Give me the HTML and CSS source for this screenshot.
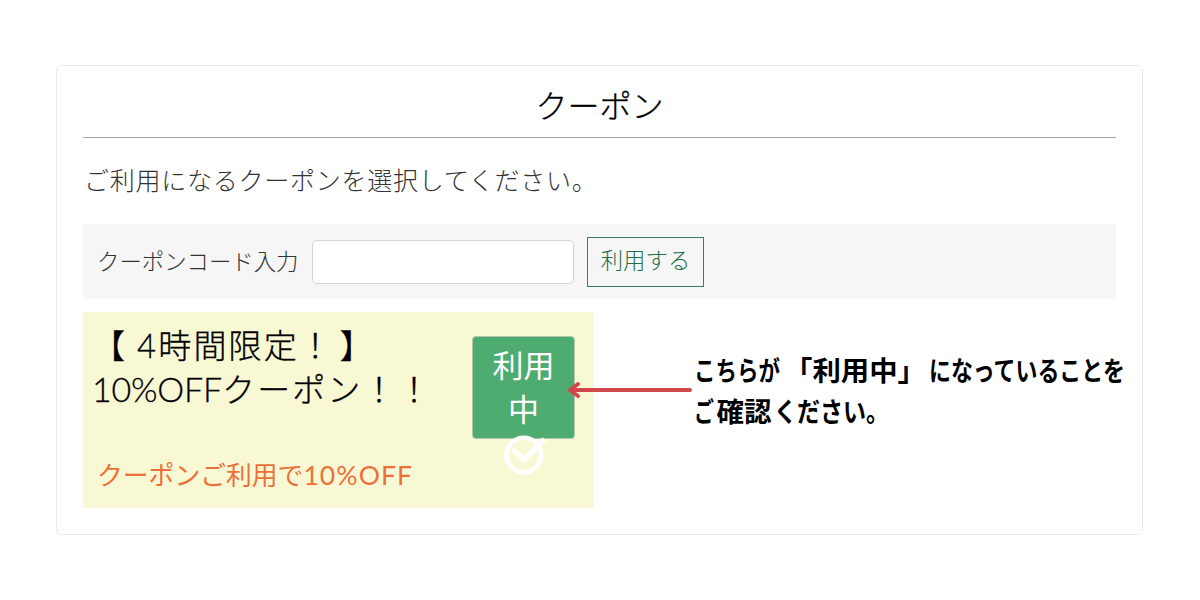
FILE: index.html
```html
<!DOCTYPE html>
<html lang="ja">
<head>
<meta charset="utf-8">
<title>クーポン</title>
<link rel="stylesheet" href="styles.css">
</head>
<body>
<main class="card">
  <h1 class="title">クーポン</h1>
  <p class="lead">ご利用になるクーポンを選択してください。</p>
  <form class="code-bar">
    <label class="code-label" for="code">クーポンコード入力</label>
    <input class="code-input" id="code" type="text">
    <button class="code-submit" type="button">利用する</button>
  </form>
  <div class="row">
    <section class="coupon">
      <div class="coupon-text">
        <h2 class="coupon-title"><span class="line">【<span class="digit">4</span>時間限定！<span class="close">】</span></span><span class="line"><span class="latin">10%OFF</span>クーポン！！</span></h2>
        <p class="coupon-note">クーポンご利用で<span class="latin-note">10%OFF</span></p>
      </div>
      <div class="status">
        <span>利用</span><span>中</span>
        <svg class="check" viewBox="0 0 44 44" width="44" height="44" fill="none" stroke="#fff">
          <circle cx="21.7" cy="23" r="17.3" stroke-width="4.6"/>
          <path d="M11 17.5 22 27.5 42.5 7" stroke-width="5"/>
        </svg>
      </div>
      <svg class="arrow" viewBox="0 0 128 20" width="128" height="20" fill="none" stroke="#d1474b" stroke-width="4" stroke-linecap="round" stroke-linejoin="round">
        <path d="M4 10H124M12 4 4 10l8 6"/>
      </svg>
    </section>
    <svg class="callout" viewBox="0 0 440 84" width="440" height="84">
      <text x="-1" y="36" textLength="86" lengthAdjust="spacingAndGlyphs">こちらが</text>
      <text x="89" y="36" textLength="142" lengthAdjust="spacingAndGlyphs">「利用中」</text>
      <text x="234" y="36" textLength="196" lengthAdjust="spacingAndGlyphs">になっていることを</text>
      <text x="-1" y="77" textLength="20" lengthAdjust="spacingAndGlyphs">ご</text>
      <text x="21.5" y="77" textLength="55" lengthAdjust="spacingAndGlyphs">確認</text>
      <text x="79" y="77" textLength="115" lengthAdjust="spacingAndGlyphs">ください。</text>
    </svg>
  </div>
</main>
</body>
</html>
```
FILE: styles.css
```css
* { box-sizing: border-box; }
body {
  margin: 0;
  padding: 65px 57px 0 56px;
  background: #fff;
  font-family: "Noto Sans CJK JP", sans-serif;
  font-weight: 300;
}
.card {
  height: 470px;
  padding: 1px 26px 0;
  border: 1px solid #e9e9e9;
  border-radius: 6px;
}
.title {
  margin: 0;
  height: 71px;
  padding-top: 14px;
  border-bottom: 1px solid #a3a3a3;
  text-align: center;
  font-size: 32px;
  line-height: 46px;
  font-weight: 300;
  color: #000;
  -webkit-text-stroke: .3px #000;
}
.lead {
  margin: 0;
  height: 86px;
  padding-left: 1px;
  font-size: 25px;
  letter-spacing: .75px;
  line-height: 82px;
  color: #333;
}
.code-bar {
  display: flex;
  align-items: center;
  height: 75px;
  padding-left: 14px;
  background: #f6f6f6;
}
.code-label {
  width: 215px;
  padding-bottom: 4px;
  font-size: 22.4px;
  color: #333;
  white-space: nowrap;
}
.code-input {
  width: 262px;
  height: 44px;
  margin: 0;
  border: 1px solid #d5d5d5;
  border-radius: 5px;
  background: #fff;
}
.code-submit {
  width: 117px;
  height: 50px;
  margin-left: 13px;
  padding: 0 0 5px;
  border: 1px solid #397e5c;
  background: transparent;
  color: #1d6f48;
  font: 300 22.4px "Noto Sans CJK JP", sans-serif;
}
.row {
  display: flex;
  margin-top: 13px;
}
.coupon {
  position: relative;
  display: flex;
  flex: none;
  width: 511px;
  height: 196px;
  background: #f9f8d5;
}
.coupon-text { width: 390px; padding: 10px 0 0 9px; }
.coupon-title {
  margin: 0;
  font-weight: 300;
  font-size: 33px;
  letter-spacing: 2.1px;
  color: #000;
  -webkit-text-stroke: .3px #000;
}
.line { display: block; height: 44px; line-height: 44px; white-space: nowrap; }
.digit { font-family: Lato, sans-serif; margin-left: 10px; }
.close { margin-left: 6px; }
.latin { font-family: Lato, sans-serif; font-size: 34px; letter-spacing: -.2px; }
.coupon-note { margin: 43px 0 0 5px; font-size: 25.8px; line-height: 42px; font-weight: 400; color: #ec7138; white-space: nowrap; }
.latin-note { font-family: Lato, sans-serif; font-size: 26.5px; letter-spacing: 1.1px; }
.status {
  position: relative;
  display: flex;
  flex-direction: column;
  align-items: center;
  width: 103px;
  height: 103px;
  margin-top: 24px;
  padding-top: 5px;
  margin-left: -1px;
  border: 1px solid #b2c6b3;
  border-radius: 4px;
  background: #4eac70;
  color: #fff;
  font-size: 31px;
  line-height: 44px;
  font-weight: 400;
}
.check { position: absolute; left: 29px; top: 95px; }
.arrow { position: absolute; left: 483px; top: 68px; }
.callout {
  flex: none;
  margin: 33px 0 0 101px;
  overflow: visible;
  font-size: 27px;
  font-weight: 700;
  fill: #000;
}
```
